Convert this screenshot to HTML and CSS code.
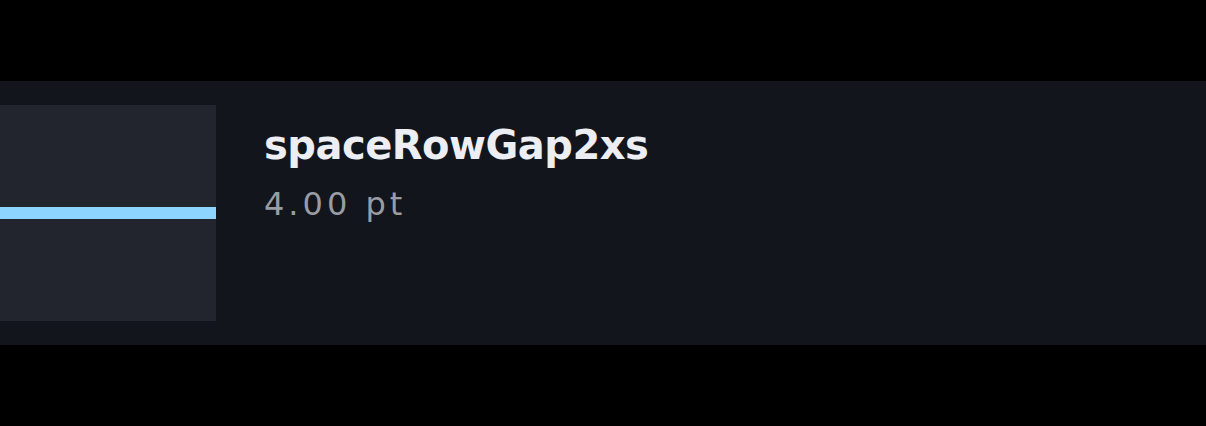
FILE: index.html
```html
<!DOCTYPE html>
<html>
<head>
<meta charset="utf-8">
<link rel="stylesheet" href="styles.css">
</head>
<body>
<div class="panel">
  <div class="swatch"><div class="bar"></div></div>
  <div class="info">
    <div class="name">spaceRowGap2xs</div>
    <div class="value">4.00 pt</div>
  </div>
</div>
</body>
</html>
```
FILE: styles.css
```css
html, body {
  margin: 0;
  background: #000;
}
body {
  padding-top: 81px;
  height: 426px;
  box-sizing: border-box;
}
.panel {
  height: 264px;
  background: #12151c;
  box-sizing: border-box;
  padding: 24px 0;
  display: flex;
  gap: 48px;
  font-family: "DejaVu Sans", sans-serif;
}
.swatch {
  width: 216px;
  height: 216px;
  background: #22252e;
  display: flex;
  flex-direction: column;
  justify-content: center;
}
.bar {
  height: 12px;
  background: #8dd5fe;
}
.info {
  padding-top: 18px;
}
.name {
  font-size: 40px;
  font-weight: bold;
  color: #eceef3;
  line-height: 44px;
  letter-spacing: -0.5px;
}
.value {
  margin-top: 19px;
  font-size: 32px;
  color: #9a9ca4;
  line-height: 36px;
  letter-spacing: 4px;
}
```
